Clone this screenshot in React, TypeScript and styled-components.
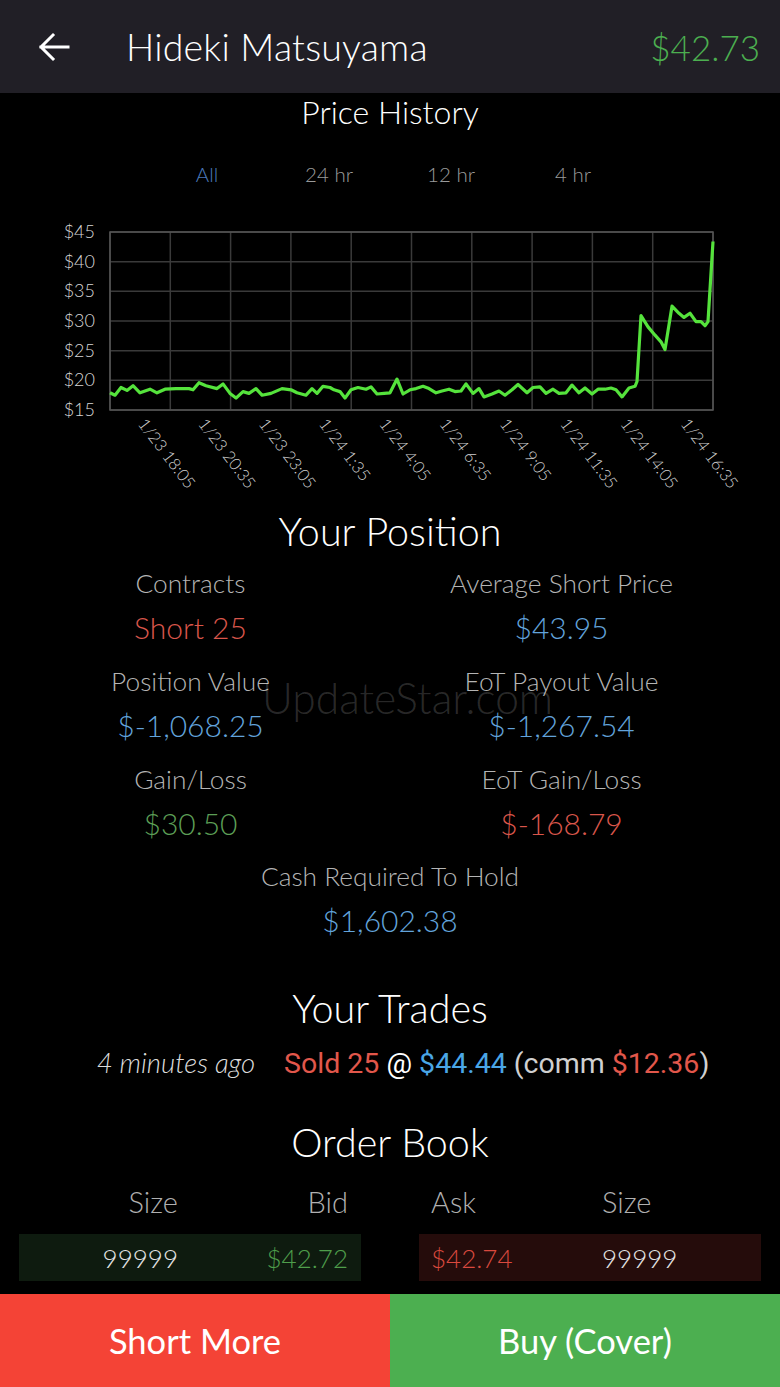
import styled, { createGlobalStyle } from 'styled-components';

const GlobalStyle = createGlobalStyle`
  html, body {
    margin: 0;
    padding: 0;
    background: #000;
  }
  body {
    font-family: Lato, "Open Sans", sans-serif;
    font-weight: 300;
    color: #fff;
  }
`;

const Page = styled.div`
  position: relative;
  width: 780px;
  height: 1387px;
  display: flex;
  flex-direction: column;
  background: #000;
  overflow: hidden;
`;

const Header = styled.header`
  height: 93px;
  flex: none;
  display: flex;
  align-items: center;
  padding: 0 20px 0 37px;
  background: #211f26;
`;

const Title = styled.h1`
  margin: 0 0 0 55px;
  font-size: 37.5px;
  font-weight: 300;
  letter-spacing: 0.2px;
  color: #fff;
`;

const HeaderPrice = styled.div`
  margin-left: auto;
  font-size: 35px;
  color: #4caf50;
`;

const SectionTitle = styled.h2<{ $size?: number; $top: number }>`
  margin: ${(p) => p.$top}px 0 0;
  height: 44px;
  line-height: 44px;
  text-align: center;
  font-size: ${(p) => p.$size ?? 39.5}px;
  font-weight: 300;
  color: #fff;
`;

const Tabs = styled.div`
  margin-top: 26px;
  display: grid;
  grid-template-columns: repeat(4, 122px);
  justify-content: center;
  height: 28px;
  line-height: 28px;
`;

const Tab = styled.div<{ $active?: boolean }>`
  text-align: center;
  font-size: 20.5px;
  color: ${(p) => (p.$active ? '#4a78b8' : '#9a9a9a')};
`;

const ChartSvg = styled.svg`
  display: block;
  margin-top: 30px;
  flex: none;
`;

const StatsGrid = styled.div`
  margin-top: 15px;
  display: grid;
  grid-template-columns: 371px 371px;
  row-gap: 19px;
  padding-left: 5px;
`;

const Stat = styled.div`
  display: flex;
  flex-direction: column;
  align-items: center;
`;

const StatLabel = styled.div`
  height: 30px;
  line-height: 30px;
  font-size: 26.3px;
  color: #b4b4b4;
  white-space: nowrap;
`;

const StatValue = styled.div<{ $tone: 'red' | 'blue' | 'green' }>`
  margin-top: 9px;
  height: 40px;
  line-height: 40px;
  font-size: 30px;
  color: ${(p) =>
    p.$tone === 'red' ? '#d9564b' : p.$tone === 'green' ? '#5c9e56' : '#62a3db'};
`;

const CashStat = styled(Stat)`
  margin-top: 18px;
`;

const TradeLine = styled.div`
  margin-top: 15px;
  height: 36px;
  line-height: 36px;
  display: flex;
  justify-content: center;
  align-items: baseline;
  padding-left: 26px;
`;

const TradeAgo = styled.span`
  font-style: italic;
  font-size: 27.5px;
  color: #dcdcdc;
  margin-right: 29px;
`;

const TradeText = styled.span`
  font-family: Roboto, "Liberation Sans", sans-serif;
  font-weight: 400;
  font-size: 28.5px;
  color: #d0d0d0;
  white-space: pre;
`;

const Tone = styled.span<{ $c: string }>`
  color: ${(p) => p.$c};
`;

const BookHead = styled.div`
  margin-top: 20px;
  display: flex;
  justify-content: space-between;
  padding: 0 19px;
`;

const BookSide = styled.div<{ $side: 'bid' | 'ask'; $filled?: boolean }>`
  width: 342px;
  height: ${(p) => (p.$filled ? 47 : 32)}px;
  display: grid;
  grid-template-columns: ${(p) => (p.$side === 'bid' ? '159px 170px' : '171px 1fr')};
  align-items: center;
  padding: ${(p) => (p.$side === 'bid' ? '0 13px 0 0' : '0 0 0 12px')};
  box-sizing: border-box;
  text-align: ${(p) => (p.$side === 'bid' ? 'right' : 'left')};
  background: ${(p) =>
    !p.$filled ? 'transparent' : p.$side === 'bid' ? '#0e1b0f' : '#250c0b'};
  font-size: ${(p) => (p.$filled ? 26 : 29)}px;
  color: ${(p) => (p.$filled ? '#e4e4e4' : '#b0b0b0')};
`;

const BookRow = styled(BookHead)`
  margin-top: 18px;
`;

const Price = styled.span<{ $side: 'bid' | 'ask' }>`
  color: ${(p) => (p.$side === 'bid' ? '#4f9e4b' : '#d9493e')};
`;

const Actions = styled.div`
  margin-top: auto;
  height: 93px;
  display: grid;
  grid-template-columns: 390px 390px;
`;

const ActionButton = styled.button<{ $kind: 'short' | 'buy' }>`
  border: none;
  margin: 0;
  font-family: Lato, "Open Sans", sans-serif;
  font-weight: 400;
  font-size: 34.5px;
  color: #fff;
  background: ${(p) => (p.$kind === 'short' ? '#f44336' : '#4caf50')};
`;

const Watermark = styled.div`
  position: absolute;
  left: 262px;
  top: 672px;
  font-family: Lato, "Open Sans", sans-serif;
  font-weight: 300;
  font-size: 42.5px;
  color: rgba(255, 255, 255, 0.17);
  pointer-events: none;
`;

const BackArrow = () => (
  <svg width="34" height="30" viewBox="0 0 34 30">
    <path
      d="M31 15H4M16 3L4 15l12 12"
      fill="none"
      stroke="#fff"
      strokeWidth="3"
      strokeLinecap="square"
    />
  </svg>
);

const series: [number, number][] = [
  [110, 17.9], [115, 17.5], [121, 18.8], [127, 18.3], [133, 19.1], [140, 17.9], [150, 18.5],
  [157, 17.9], [165, 18.5], [176, 18.6], [189, 18.6], [193, 18.4], [199, 19.6], [206, 19.1],
  [217, 18.6], [223, 19.4], [230, 17.8], [236, 17.0], [243, 18.1], [249, 17.8], [256, 18.6],
  [262, 17.5], [271, 17.8], [282, 18.6], [291, 18.4], [297, 17.9], [306, 17.5], [312, 18.6],
  [317, 17.8], [323, 19.0], [330, 18.8], [334, 18.4], [340, 18.1], [345, 17.0], [351, 18.4],
  [358, 18.8], [366, 18.5], [371, 18.9], [377, 17.7], [384, 17.8], [390, 17.9], [397, 20.2],
  [403, 17.7], [410, 18.4], [416, 18.6], [423, 19.0], [429, 18.6], [436, 17.9], [442, 18.2],
  [449, 18.5], [455, 18.1], [461, 18.2], [466, 19.4], [473, 17.8], [479, 18.6], [484, 17.2],
  [492, 17.7], [499, 18.2], [505, 17.5], [512, 18.4], [518, 19.3], [527, 17.9], [533, 18.8],
  [540, 18.9], [546, 17.8], [553, 18.5], [559, 17.8], [566, 17.9], [572, 19.2], [579, 17.9],
  [585, 18.7], [592, 17.7], [598, 18.5], [605, 18.5], [611, 18.7], [616, 18.4], [622, 17.2],
  [629, 18.7], [635, 19.0], [637, 19.8], [641, 30.9], [648, 29.0], [655, 27.6], [661, 26.5],
  [665, 25.2], [672, 32.5], [679, 31.3], [684, 30.6], [690, 31.3], [696, 29.9], [701, 29.9],
  [705, 29.2], [708, 29.9], [713, 43.4],
];

const PLOT = { left: 110, right: 713, top: 232, bottom: 410 };
const yFor = (v: number) => PLOT.bottom - ((v - 15) / 30) * (PLOT.bottom - PLOT.top);

const xLabels = [
  '1/23 18:05', '1/23 20:35', '1/23 23:05', '1/24 1:35', '1/24 4:05',
  '1/24 6:35', '1/24 9:05', '1/24 11:35', '1/24 14:05', '1/24 16:35',
];

const PriceChart = () => {
  const colW = (PLOT.right - PLOT.left) / 10;
  const rows = [45, 40, 35, 30, 25, 20, 15];
  const line = series.map(([x, v]) => `${x},${yFor(v).toFixed(1)}`).join(' ');
  return (
    <ChartSvg width="780" height="280" viewBox="0 218 780 280">
      {rows.map((r) => (
        <g key={r}>
          <line x1={PLOT.left} x2={PLOT.right} y1={yFor(r)} y2={yFor(r)} stroke="#3a3a3a" strokeWidth="1.5" />
          <text x="95" y={yFor(r) + 6} textAnchor="end" fontSize="18" fill="#d6d6d6" fontFamily="Lato, sans-serif">
            ${r}
          </text>
        </g>
      ))}
      {Array.from({ length: 11 }, (_, i) => (
        <line
          key={i}
          x1={PLOT.left + i * colW}
          x2={PLOT.left + i * colW}
          y1={PLOT.top}
          y2={PLOT.bottom}
          stroke="#3a3a3a"
          strokeWidth="1.5"
        />
      ))}
      <rect x={PLOT.left} y={PLOT.top} width={PLOT.right - PLOT.left} height={PLOT.bottom - PLOT.top} fill="none" stroke="#555" strokeWidth="1.5" />
      <polyline points={line} fill="none" stroke="#55e33c" strokeWidth="3.2" strokeLinejoin="round" />
      {xLabels.map((l, i) => {
        const x = PLOT.left + (i + 1) * colW - 33;
        const y = 424;
        return (
          <text
            key={l}
            x={x}
            y={y}
            fontSize="16.5"
            fill="#d0d0d0"
            fontFamily="Lato, sans-serif"
            transform={`rotate(53 ${x} ${y})`}
          >
            {l}
          </text>
        );
      })}
    </ChartSvg>
  );
};

export default function App() {
  return (
    <Page>
      <GlobalStyle />
      <Header>
        <BackArrow />
        <Title>Hideki Matsuyama</Title>
        <HeaderPrice>$42.73</HeaderPrice>
      </Header>

      <SectionTitle $top={-3} $size={32}>Price History</SectionTitle>
      <Tabs>
        <Tab $active>All</Tab>
        <Tab>24 hr</Tab>
        <Tab>12 hr</Tab>
        <Tab>4 hr</Tab>
      </Tabs>
      <PriceChart />

      <SectionTitle $top={11}>Your Position</SectionTitle>
      <StatsGrid>
        <Stat>
          <StatLabel>Contracts</StatLabel>
          <StatValue $tone="red">Short 25</StatValue>
        </Stat>
        <Stat>
          <StatLabel>Average Short Price</StatLabel>
          <StatValue $tone="blue">$43.95</StatValue>
        </Stat>
        <Stat>
          <StatLabel>Position Value</StatLabel>
          <StatValue $tone="blue">$-1,068.25</StatValue>
        </Stat>
        <Stat>
          <StatLabel>EoT Payout Value</StatLabel>
          <StatValue $tone="blue">$-1,267.54</StatValue>
        </Stat>
        <Stat>
          <StatLabel>Gain/Loss</StatLabel>
          <StatValue $tone="green">$30.50</StatValue>
        </Stat>
        <Stat>
          <StatLabel>EoT Gain/Loss</StatLabel>
          <StatValue $tone="red">$-168.79</StatValue>
        </Stat>
      </StatsGrid>
      <CashStat>
        <StatLabel>Cash Required To Hold</StatLabel>
        <StatValue $tone="blue">$1,602.38</StatValue>
      </CashStat>

      <SectionTitle $top={46}>Your Trades</SectionTitle>
      <TradeLine>
        <TradeAgo>4 minutes ago</TradeAgo>
        <TradeText>
          <Tone $c="#e2574b">Sold 25</Tone> <Tone $c="#fff">@</Tone> <Tone $c="#4aa6e6">$44.44</Tone> (comm{' '}
          <Tone $c="#e2574b">$12.36</Tone>)
        </TradeText>
      </TradeLine>

      <SectionTitle $top={39}>Order Book</SectionTitle>
      <BookHead>
        <BookSide $side="bid">
          <span>Size</span>
          <span>Bid</span>
        </BookSide>
        <BookSide $side="ask">
          <span>Ask</span>
          <span>Size</span>
        </BookSide>
      </BookHead>
      <BookRow>
        <BookSide $side="bid" $filled>
          <span>99999</span>
          <Price $side="bid">$42.72</Price>
        </BookSide>
        <BookSide $side="ask" $filled>
          <Price $side="ask">$42.74</Price>
          <span>99999</span>
        </BookSide>
      </BookRow>

      <Actions>
        <ActionButton $kind="short">Short More</ActionButton>
        <ActionButton $kind="buy">Buy (Cover)</ActionButton>
      </Actions>

      <Watermark>UpdateStar.com</Watermark>
    </Page>
  );
}
